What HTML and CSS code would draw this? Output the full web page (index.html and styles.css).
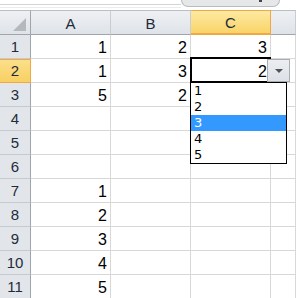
FILE: index.html
```html
<!doctype html>
<html>
    <head>
        <meta charset="utf-8">
        <title>Sheet</title>
        <link rel="stylesheet" href="styles.css">
    </head>
    <body>
        <div id="topbar">
            <div class="bar-line"></div>
            <div class="bar-tab"><span class="tab-mark"></span></div>
            <div class="bar-rest"></div>
        </div>

        <div id="sheet">
            <div class="hdr corner">
                <svg width="31" height="24" viewBox="0 0 31 24"><polygon points="26,7 26,20 13,20" fill="#b5b9be"/></svg>
            </div>
            <div class="hdr col">A</div>
            <div class="hdr col">B</div>
            <div class="hdr col sel">C</div>
            <div class="hdr col last"></div>

            <div class="hdr row">1</div>
            <div class="cell">1</div><div class="cell">2</div><div class="cell">3</div><div class="cell"></div>

            <div class="hdr row sel">2</div>
            <div class="cell">1</div><div class="cell">3</div>
            <div class="cell active">2
                <div class="dd-button"><span class="dd-arrow"></span></div>
                <ul class="dd-list">
                    <li>1</li>
                    <li>2</li>
                    <li class="hilite">3</li>
                    <li>4</li>
                    <li>5</li>
                </ul>
            </div>
            <div class="cell"></div>

            <div class="hdr row">3</div>
            <div class="cell">5</div><div class="cell">2</div><div class="cell"></div><div class="cell"></div>

            <div class="hdr row">4</div>
            <div class="cell"></div><div class="cell"></div><div class="cell"></div><div class="cell"></div>

            <div class="hdr row">5</div>
            <div class="cell"></div><div class="cell"></div><div class="cell"></div><div class="cell"></div>

            <div class="hdr row">6</div>
            <div class="cell"></div><div class="cell"></div><div class="cell"></div><div class="cell"></div>

            <div class="hdr row">7</div>
            <div class="cell">1</div><div class="cell"></div><div class="cell"></div><div class="cell"></div>

            <div class="hdr row">8</div>
            <div class="cell">2</div><div class="cell"></div><div class="cell"></div><div class="cell"></div>

            <div class="hdr row">9</div>
            <div class="cell">3</div><div class="cell"></div><div class="cell"></div><div class="cell"></div>

            <div class="hdr row">10</div>
            <div class="cell">4</div><div class="cell"></div><div class="cell"></div><div class="cell"></div>

            <div class="hdr row">11</div>
            <div class="cell">5</div><div class="cell"></div><div class="cell"></div><div class="cell"></div>
        </div>
    </body>
</html>
```

FILE: styles.css
```css
html, body {
    margin: 0;
    padding: 0;
    background: #fff;
    overflow: hidden;
}
body {
    font-family: "Liberation Sans", Arial, sans-serif;
    color: #000;
}

#topbar {
    display: flex;
    height: 10px;
}
.bar-line {
    width: 181px;
    border-top: solid 1px #fff;
    background: linear-gradient(180deg, #fff 0, #fff 3px, #d4d4d4 3px, #d4d4d4 4px, #fff 4px, #fff 6px, #ececec 6px, #ececec 7px, #fff 7px);
}
.bar-tab {
    position: relative;
    width: 97px;
    height: 6px;
    background: #e6e7e9;
    border: solid 1px #b9bcc0;
    border-top: none;
    border-radius: 0 0 9px 9px;
}
.tab-mark {
    position: absolute;
    left: 77px;
    top: 0;
    width: 3px;
    height: 2px;
    background: #444;
}
.bar-rest {
    flex: 1;
}

#sheet {
    display: grid;
    grid-template-columns: 31px 80px 80px 80px 1fr;
    grid-template-rows: 25px;
    grid-auto-rows: 24px;
}

.hdr {
    box-sizing: border-box;
    font-size: 15px;
    color: #1e2b3a;
    text-align: center;
    background: #e2e6eb;
}
.hdr.corner {
    border-top: solid 1px #b9bec5;
    border-right: solid 1px #9ea5ad;
    border-bottom: solid 1px #9ea5ad;
    background: linear-gradient(180deg, #eef0f3, #dfe3e8);
}
.hdr.corner svg {
    display: block;
}
.hdr.col {
    border-top: solid 1px #b9bec5;
    border-right: solid 1px #c9cdd2;
    border-bottom: solid 1px #9ea5ad;
    background: linear-gradient(180deg, #eef0f3, #dfe3e8);
    line-height: 23px;
    padding-top: 1px;
}
.hdr.col.sel {
    border: solid 1px #f0a843;
    border-left: none;
    border-bottom-width: 2px;
    background: linear-gradient(180deg, #fde9a2, #f9d568);
    line-height: 22px;
}
.hdr.row {
    border-right: solid 1px #9ea5ad;
    border-bottom: solid 1px #c5cad0;
    line-height: 22px;
    padding-top: 1px;
}
.hdr.row.sel {
    background: linear-gradient(180deg, #fbe08c, #f8d062);
    border-right-color: #f0a843;
    border-bottom-color: #f0a843;
    box-shadow: inset 0 1px #f0a843;
}

.cell {
    position: relative;
    box-sizing: border-box;
    border-right: solid 1px #d8d8d8;
    border-bottom: solid 1px #d8d8d8;
    font-size: 16px;
    line-height: 22px;
    padding: 2px 3px 0 0;
    text-align: right;
}

.cell.active::after {
    content: "";
    position: absolute;
    top: -2px;
    left: -1px;
    right: -1px;
    bottom: -1px;
    border: solid 2px #000;
}
.dd-button {
    position: absolute;
    z-index: 3;
    left: 76px;
    top: 0;
    width: 23px;
    height: 23px;
    box-sizing: border-box;
    border: solid 1px #a8adb3;
    background: linear-gradient(180deg, #eceef1, #dde1e6);
    display: flex;
    align-items: center;
    justify-content: center;
}
.dd-arrow {
    width: 0;
    height: 0;
    border-left: solid 4px transparent;
    border-right: solid 4px transparent;
    border-top: solid 4px #505458;
}
.dd-list {
    position: absolute;
    z-index: 2;
    left: -1px;
    top: 23px;
    width: 97px;
    box-sizing: border-box;
    margin: 0;
    padding: 0;
    list-style: none;
    background: #fff;
    border: solid 1px #000;
    text-align: left;
    font-family: "DejaVu Sans", Tahoma, sans-serif;
    font-size: 13px;
    line-height: 16px;
}
.dd-list li {
    height: 16px;
    padding-left: 3px;
}
.dd-list li.hilite {
    background: #3399ff;
    color: #fff;
}
```
